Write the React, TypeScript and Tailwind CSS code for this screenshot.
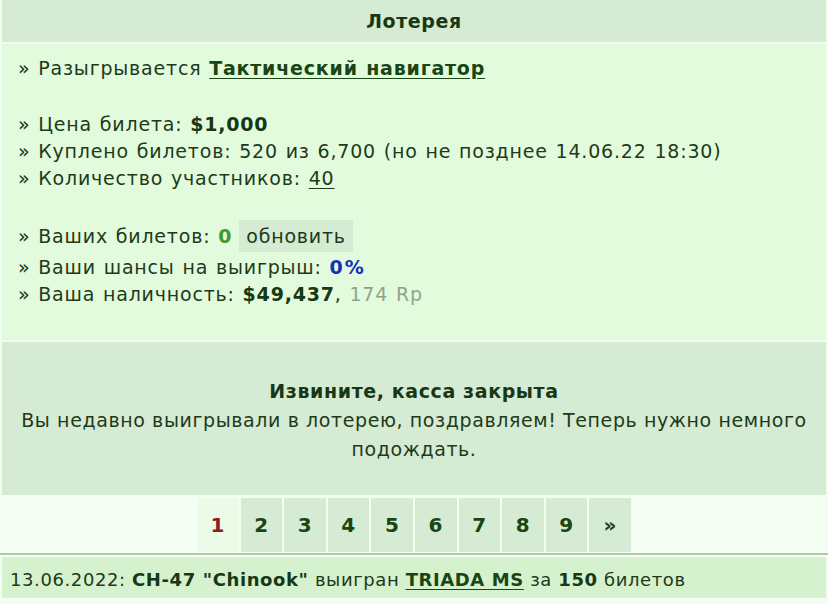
import React from "react";

const pages = ["1", "2", "3", "4", "5", "6", "7", "8", "9", "»"];

function Line({ children, className = "" }: { children: React.ReactNode; className?: string }) {
  return <div className={`h-[27px] leading-[27px] whitespace-nowrap ${className}`}>{children}</div>;
}

export default function App() {
  return (
    <div className="w-[828px] h-[604px] overflow-hidden bg-[#f4fdf1] text-[19px] tracking-[0.6px] text-[#1d3a19] font-['DejaVu_Sans','Liberation_Sans',sans-serif]">
      {/* title bar */}
      <div className="mx-[2px] h-[42px] bg-[#d6ebd3] flex items-center justify-center font-bold text-[#173814]">
        Лотерея
      </div>

      {/* lottery info */}
      <div className="mx-[2px] mt-[2px] h-[296px] bg-[#e3fbdd] pl-[16px] pt-[11px] tracking-[0.8px] [word-spacing:1px]">
        <Line>
          » Разыгрывается{" "}
          <a className="font-bold underline underline-offset-[3px] text-[#1a4614]">Тактический навигатор</a>
        </Line>
        <div className="h-[29px]" />
        <Line>
          » Цена билета: <b className="text-[#173814]">$1,000</b>
        </Line>
        <Line>» Куплено билетов: 520 из 6,700 (но не позднее 14.06.22 18:30)</Line>
        <Line>
          » Количество участников: <a className="underline underline-offset-[3px]">40</a>
        </Line>
        <div className="h-[28px]" />
        <div className="h-[32px] flex items-center whitespace-nowrap">
          <span>» Ваших билетов:&nbsp;</span>
          <b className="text-[#3f9a2e]">0</b>
          <span className="ml-[7px] h-[32px] px-[7px] bg-[#d6ebd3] flex items-center">обновить</span>
        </div>
        <div className="h-[2px]" />
        <Line>
          » Ваши шансы на выигрыш: <b className="text-[#1530b8] tracking-[2px]">0%</b>
        </Line>
        <Line>
          » Ваша наличность: <b className="text-[#173814]">$49,437</b>, <span className="text-[#8fa38b]">174 Rp</span>
        </Line>
      </div>

      {/* closed notice */}
      <div className="mx-[2px] mt-[2px] h-[153px] bg-[#d6ebd3] pt-[35px] text-center leading-[29px]">
        <div className="font-bold text-[#173814]">Извините, касса закрыта</div>
        <div className="px-[8px]">
          Вы недавно выигрывали в лотерею, поздравляем! Теперь нужно немного подождать.
        </div>
      </div>

      {/* pagination */}
      <div className="h-[58px] pt-[3px] flex justify-center gap-[2px]">
        {pages.map((p, i) => (
          <div
            key={p}
            className={`w-[41.6px] h-[54px] flex items-center justify-center font-bold text-[20px] ${
              i === 0 ? "bg-[#ebfbe7] text-[#8b1d1d]" : "bg-[#d6ebd3] text-[#1a4614]"
            }`}
          >
            {p}
          </div>
        ))}
      </div>
      <div className="h-[2px] bg-[#b3c8af]" />

      {/* last draw */}
      <div className="mx-[2px] mt-[2px] h-[41px] bg-[#d5f1ce] pl-[8px] pt-[3px] flex items-center whitespace-nowrap text-[18px]">
        13.06.2022:&nbsp;<b className="text-[#173814]">CH-47 "Chinook"</b>&nbsp;выигран&nbsp;
        <a className="font-bold underline underline-offset-[3px] text-[#1a4614]">TRIADA MS</a>&nbsp;за&nbsp;
        <b className="text-[#173814]">150</b>&nbsp;билетов
      </div>
    </div>
  );
}
